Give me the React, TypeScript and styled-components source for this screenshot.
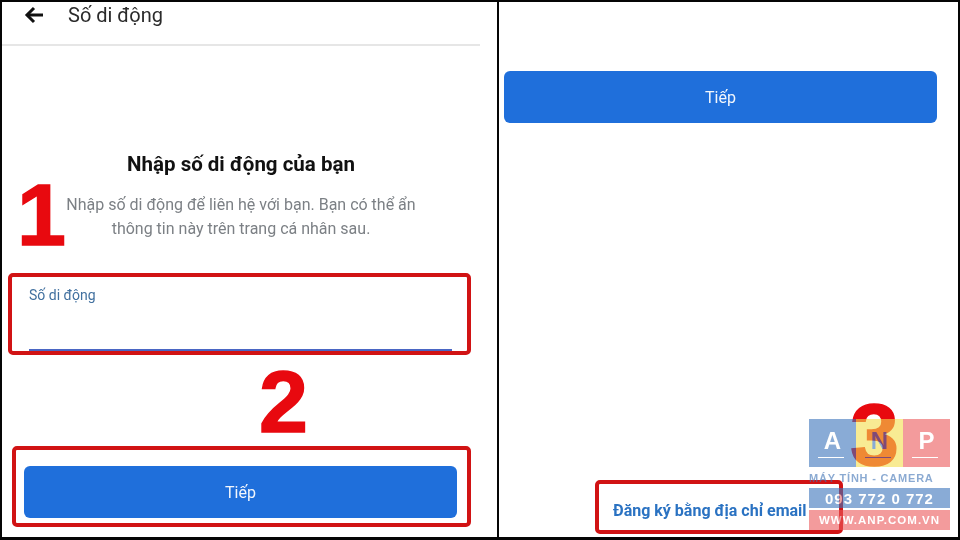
import React from 'react';
import styled, { createGlobalStyle } from 'styled-components';

const GlobalStyle = createGlobalStyle`
  html, body {
    margin: 0;
    padding: 0;
    background: #000;
  }
  body {
    font-family: Roboto, "Liberation Sans", sans-serif;
  }
`;

const Page = styled.div`
  width: 960px;
  height: 540px;
  box-sizing: border-box;
  padding: 2px 2px 3px;
  display: grid;
  grid-template-columns: 495px 459px;
  column-gap: 2px;
  background: #050505;
  overflow: hidden;
`;

const Panel = styled.section`
  position: relative;
  display: flex;
  flex-direction: column;
  align-items: flex-start;
  background: #fff;
  filter: blur(0.4px);
`;

const Header = styled.header`
  box-sizing: border-box;
  width: 478px;
  height: 44px;
  padding: 0 0 16px 22px;
  display: flex;
  align-items: center;
  gap: 24px;
  border-bottom: 2px solid #e6e6e6;
  color: #2b2b2b;
  font-size: 20px;
`;

const Intro = styled.div`
  width: 478px;
  margin-top: 105px;
  text-align: center;
`;

const Title = styled.h1`
  margin: 0;
  font-size: 20.5px;
  line-height: 26px;
  font-weight: 700;
  color: #111;
`;

const Subtitle = styled.p`
  margin: 16px 0 0;
  font-size: 16px;
  line-height: 24px;
  color: #7c8085;
`;

const RedFrame = styled.div<{ $w: number; $h: number; $mt: number; $ml: number }>`
  box-sizing: border-box;
  width: ${(p) => p.$w}px;
  height: ${(p) => p.$h}px;
  margin-top: ${(p) => p.$mt}px;
  margin-left: ${(p) => p.$ml}px;
  border: 4px solid #d11314;
  border-radius: 5px;
`;

const Field = styled.div`
  height: 100%;
  padding: 9px 15px 0 17px;
  box-sizing: border-box;
  display: flex;
  flex-direction: column;
  justify-content: space-between;
`;

const FieldLabel = styled.label`
  font-size: 14px;
  line-height: 18px;
  color: #41709f;
`;

const FieldLine = styled.div`
  height: 2px;
  background: #4a66c4;
`;

const Button = styled.button<{ $mt: number; $ml: number }>`
  display: block;
  width: 433px;
  height: 52px;
  margin-top: ${(p) => p.$mt}px;
  margin-left: ${(p) => p.$ml}px;
  padding: 0;
  border: 0;
  border-radius: 6px;
  background: #1f6fdb;
  color: #f2f6fc;
  font-family: inherit;
  font-size: 16px;
`;

const EmailLink = styled.a`
  display: block;
  padding: 17px 0 0 14px;
  font-size: 16px;
  line-height: 20px;
  font-weight: 700;
  color: #2a72c2;
  white-space: nowrap;
`;

const Mark = styled.span<{ $x: number; $y: number; $size?: number }>`
  position: absolute;
  left: ${(p) => p.$x}px;
  top: ${(p) => p.$y}px;
  font-family: "Liberation Sans", Arial, sans-serif;
  font-size: ${(p) => p.$size ?? 88}px;
  line-height: 1;
  font-weight: 700;
  color: #e8090f;
  -webkit-text-stroke: 1.5px #e8090f;
`;

const Watermark = styled.div`
  position: absolute;
  left: 310px;
  top: 417px;
  width: 141px;
  opacity: 0.6;
  font-family: "Liberation Sans", Arial, sans-serif;
`;

const LogoRow = styled.div`
  display: grid;
  grid-template-columns: repeat(3, 47px);
  height: 48px;
`;

const LogoCell = styled.div<{ $bg: string; $fg: string }>`
  position: relative;
  display: flex;
  align-items: center;
  justify-content: center;
  padding-bottom: 4px;
  box-sizing: border-box;
  background: ${(p) => p.$bg};
  color: ${(p) => p.$fg};
  font-size: 24px;
  font-weight: 700;
  transform-origin: center;
  &::after {
    content: '';
    position: absolute;
    left: 9px;
    right: 12px;
    bottom: 9px;
    height: 1px;
    background: ${(p) => p.$fg};
  }
`;

const Tagline = styled.div`
  height: 21px;
  display: flex;
  align-items: center;
  justify-content: space-between;
  font-size: 11px;
  font-weight: 700;
  letter-spacing: 0.8px;
  color: #3f73b5;
  white-space: nowrap;
`;

const Band = styled.div<{ $bg: string; $size: number; $mt: number }>`
  height: 20px;
  margin-top: ${(p) => p.$mt}px;
  display: flex;
  align-items: center;
  justify-content: center;
  background: ${(p) => p.$bg};
  color: #fff;
  font-size: ${(p) => p.$size}px;
  font-weight: 700;
  letter-spacing: 1px;
  white-space: nowrap;
`;

function BackArrow() {
  return (
    <svg width="20" height="18" viewBox="0 0 20 18" fill="none" stroke="#111" strokeWidth="3">
      <path d="M19 9H3" />
      <path d="M10 2L3 9l7 7" />
    </svg>
  );
}

function App() {
  return (
    <Page>
      <GlobalStyle />
      <Panel>
        <Header>
          <BackArrow />
          <span>Số di động</span>
        </Header>
        <Intro>
          <Title>Nhập số di động của bạn</Title>
          <Subtitle>
            Nhập số di động để liên hệ với bạn. Bạn có thể ẩn
            <br />
            thông tin này trên trang cá nhân sau.
          </Subtitle>
        </Intro>
        <RedFrame $w={463} $h={82} $mt={32} $ml={6}>
          <Field>
            <FieldLabel>Số di động</FieldLabel>
            <FieldLine />
          </Field>
        </RedFrame>
        <RedFrame $w={459} $h={81} $mt={91} $ml={10}>
          <Button $mt={16} $ml={8}>Tiếp</Button>
        </RedFrame>
        <Mark $x={15} $y={169}>1</Mark>
        <Mark $x={257} $y={356}>2</Mark>
      </Panel>
      <Panel>
        <Button $mt={69} $ml={5}>Tiếp</Button>
        <RedFrame $w={248} $h={54} $mt={357} $ml={96}>
          <EmailLink>Đăng ký bằng địa chỉ email</EmailLink>
        </RedFrame>
        <Mark $x={351} $y={389}>3</Mark>
        <Watermark>
          <LogoRow>
            <LogoCell $bg="#3c75bb" $fg="#fff">A</LogoCell>
            <LogoCell $bg="#f5df4d" $fg="#3c75bb">N</LogoCell>
            <LogoCell $bg="#ec5a5c" $fg="#fff">P</LogoCell>
          </LogoRow>
          <Tagline>MÁY TÍNH - CAMERA</Tagline>
          <Band $bg="#3c75bb" $size={15} $mt={0}>093 772 0 772</Band>
          <Band $bg="#ec5a5c" $size={11.5} $mt={2}>WWW.ANP.COM.VN</Band>
        </Watermark>
      </Panel>
    </Page>
  );
}

export default App;
